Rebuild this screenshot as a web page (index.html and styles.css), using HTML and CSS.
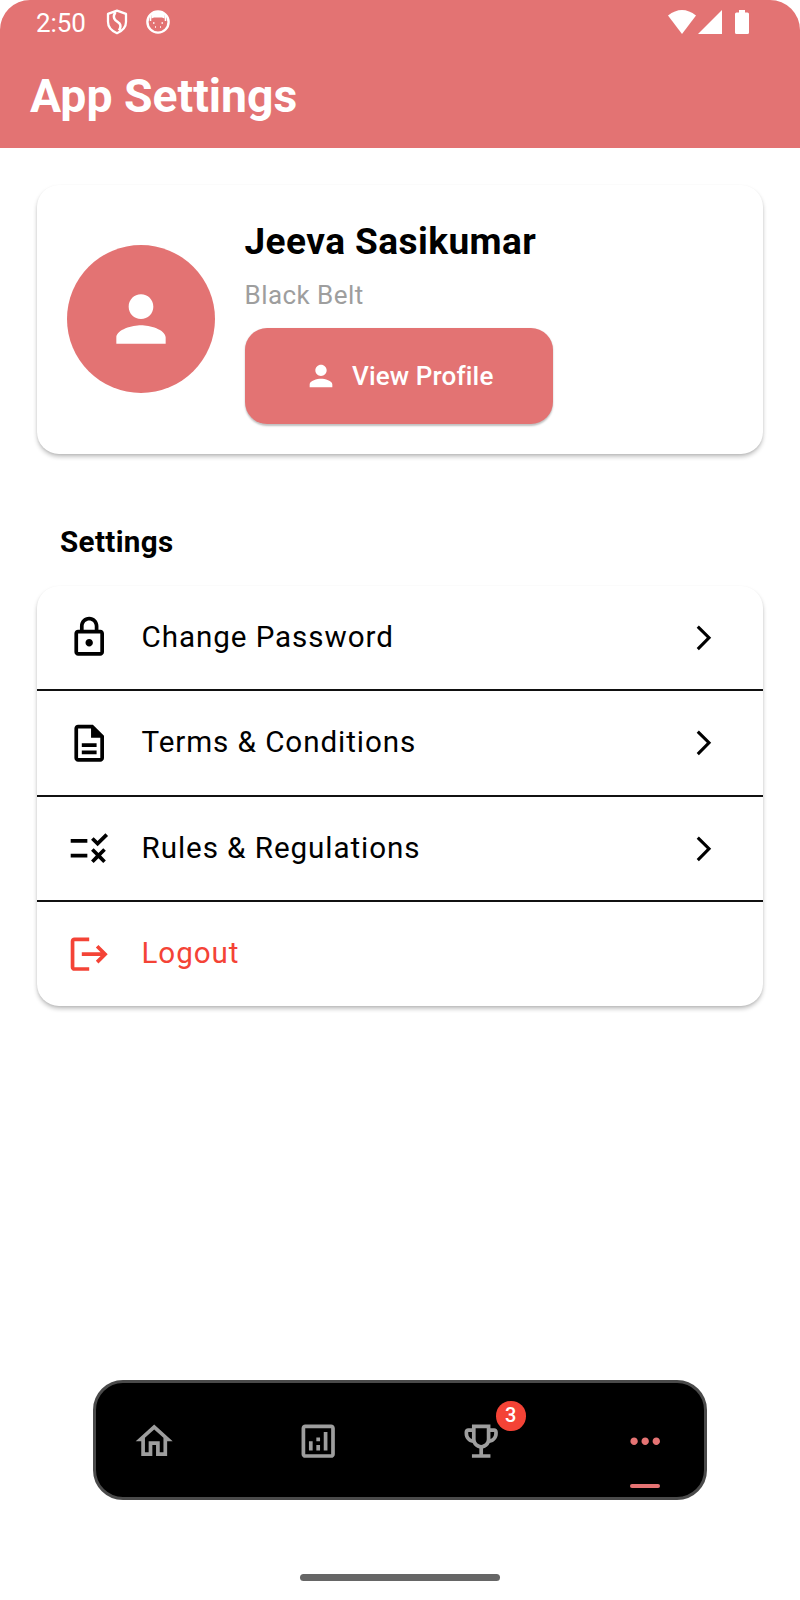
FILE: index.html
```html
<!DOCTYPE html>
<html lang="en">
<head>
<meta charset="utf-8">
<title>App Settings</title>
<link rel="stylesheet" href="styles.css">
</head>
<body>
<div class="screen">
  <header class="app-bar">
    <div class="status">
      <span class="time">2:50</span>
      <svg class="shield" viewBox="0 0 22 26"><path d="M11 1.6L20 4.800V13C20 18 16.500 21.800 11 24.200C5.500 21.800 2 18 2 13V4.800Z"/><path class="curve" d="M9.500 3C5 10 11 12 13.500 14.500C15.500 17 14.500 19 13 21.500"/></svg>
      <svg class="face" viewBox="0 0 24 24"><circle cx="12" cy="12" r="10.600"/><path class="solid" d="M5 3.500Q12-1 19 3.500L18.500 8.500L16 7.500H8L5.500 8.500Z"/><path class="marks" d="M4.500 6v5M19.500 6v5M7 13h1.500M15.500 13h1.500M9 17h1M14 17h1"/></svg>
      <span class="spacer"></span>
      <svg class="wifi" viewBox="0 0 28 24"><path d="M0 5.500Q14-5.500 28 5.500L14 24Z"/></svg>
      <svg class="signal" viewBox="0 0 24 24"><path d="M24 0V24H0Z"/></svg>
      <svg class="battery" viewBox="0 0 14 24"><path d="M4 0h6v2.500h2.500Q14 2.500 14 4V22.500Q14 24 12.500 24h-11Q0 24 0 22.500V4Q0 2.500 1.500 2.500H4Z"/></svg>
    </div>
    <h1>App Settings</h1>
  </header>

  <main>
    <section class="card profile">
      <div class="avatar"><svg viewBox="0 0 24 24"><path d="M12 12c2.210 0 4-1.790 4-4s-1.790-4-4-4-4 1.790-4 4 1.790 4 4 4zm0 2c-2.670 0-8 1.340-8 4v2h16v-2c0-2.660-5.330-4-8-4z"/></svg></div>
      <div class="info">
        <h2>Jeeva Sasikumar</h2>
        <p>Black Belt</p>
        <button class="view"><svg viewBox="0 0 24 24"><path d="M12 12c2.210 0 4-1.790 4-4s-1.790-4-4-4-4 1.790-4 4 1.790 4 4 4zm0 2c-2.670 0-8 1.340-8 4v2h16v-2c0-2.660-5.330-4-8-4z"/></svg><span>View Profile</span></button>
      </div>
    </section>

    <h3>Settings</h3>
    <section class="card list">
      <div class="row">
        <svg class="icon" viewBox="0 0 24 24"><path d="M12 17c1.100 0 2-.9 2-2s-.9-2-2-2-2 .9-2 2 .9 2 2 2zm6-9h-1V6c0-2.760-2.240-5-5-5S7 3.240 7 6v2H6c-1.100 0-2 .9-2 2v10c0 1.100.9 2 2 2h12c1.100 0 2-.9 2-2V10c0-1.100-.9-2-2-2zM9 6c0-1.660 1.340-3 3-3s3 1.340 3 3v2H9V6zm9 14H6V10h12v10z"/></svg>
        <span class="label">Change Password</span>
        <svg class="chevron" viewBox="0 0 24 24"><path d="M6.230 20.230L8 22l10-10L8 2 6.230 3.770 14.460 12z"/></svg>
      </div>
      <div class="row tall">
        <svg class="icon" viewBox="0 0 24 24"><path d="M8 16h8v2H8zm0-4h8v2H8zm6-10H6c-1.100 0-2 .9-2 2v16c0 1.100.89 2 1.990 2H18c1.100 0 2-.9 2-2V8l-6-6zm4 18H6V4h7v5h5v11z"/></svg>
        <span class="label">Terms &amp; Conditions</span>
        <svg class="chevron" viewBox="0 0 24 24"><path d="M6.230 20.230L8 22l10-10L8 2 6.230 3.770 14.460 12z"/></svg>
      </div>
      <div class="row">
        <svg class="icon" viewBox="0 0 24 24"><path d="M16.540 11L13 7.460l1.410-1.410 2.120 2.120 4.240-4.240 1.410 1.410L16.540 11zM11 7H2v2h9V7zM21 13.410L19.590 12 17 14.590 14.410 12 13 13.410 15.590 16 13 18.590 14.410 20 17 17.410 19.590 20 21 18.590 18.410 16 21 13.410zM11 15H2v2h9v-2z"/></svg>
        <span class="label">Rules &amp; Regulations</span>
        <svg class="chevron" viewBox="0 0 24 24"><path d="M6.230 20.230L8 22l10-10L8 2 6.230 3.770 14.460 12z"/></svg>
      </div>
      <div class="row logout">
        <svg class="icon" viewBox="0 0 24 24"><path d="M17 7l-1.410 1.410L18.170 11H8v2h10.170l-2.580 2.580L17 17l5-5zM4 5h8V3H4c-1.100 0-2 .9-2 2v14c0 1.100.9 2 2 2h8v-2H4V5z"/></svg>
        <span class="label">Logout</span>
      </div>
    </section>
  </main>

  <nav class="tabs">
    <a class="tab"><svg viewBox="0 0 24 24"><path d="M12 5.690l5 4.500V18h-2v-6H9v6H7v-7.810l5-4.500M12 3L2 12h3v8h6v-6h2v6h6v-8h3L12 3z"/></svg></a>
    <a class="tab"><svg viewBox="0 0 24 24"><path d="M19 3H5c-1.100 0-2 .9-2 2v14c0 1.100.9 2 2 2h14c1.100 0 2-.9 2-2V5c0-1.100-.9-2-2-2zm0 16H5V5h14v14zM7 12h2v5H7zM15 7h2v10h-2zM11 14h2v3h-2zM11 10h2v2h-2z"/></svg></a>
    <a class="tab"><svg viewBox="0 0 24 24"><path d="M19 5h-2V3H7v2H5c-1.100 0-2 .9-2 2v1c0 2.550 1.920 4.630 4.390 4.940.63 1.500 1.980 2.630 3.610 2.960V19H7v2h10v-2h-4v-3.100c1.630-.33 2.980-1.460 3.610-2.960C19.080 12.630 21 10.550 21 8V7c0-1.100-.9-2-2-2zM5 8V7h2v3.820C5.840 10.400 5 9.300 5 8zm7 6c-1.650 0-3-1.350-3-3V5h6v6c0 1.650-1.350 3-3 3zm7-6c0 1.300-.84 2.400-2 2.820V7h2v1z"/></svg><span class="badge">3</span></a>
    <a class="tab active"><svg viewBox="0 0 24 24"><path d="M6 10c-1.100 0-2 .9-2 2s.9 2 2 2 2-.9 2-2-.9-2-2-2zm12 0c-1.100 0-2 .9-2 2s.9 2 2 2 2-.9 2-2-.9-2-2-2zm-6 0c-1.100 0-2 .9-2 2s.9 2 2 2 2-.9 2-2-.9-2-2-2z"/></svg></a>
  </nav>
  <div class="handle"></div>
</div>
</body>
</html>
```
FILE: styles.css
```css
* { box-sizing: border-box; }
body { margin: 0; background: #fff; font-family: Roboto, sans-serif; color: #000; }
svg { display: block; flex: none; fill: currentColor; }
h1, h2, h3, p { margin: 0; }
.screen { width: 800px; height: 1600px; display: flex; flex-direction: column; align-items: center; }

.app-bar { width: 100%; height: 148px; background: #e37373; color: #fff; border-radius: 30px 30px 0 0; }
.status { display: flex; align-items: center; height: 44px; padding: 0 51px 0 36px; }
.time { width: 50px; font-size: 26px; line-height: 30px; letter-spacing: -0.1px; margin-top: 1px; }
.shield { width: 22px; height: 26px; margin-left: 20px; }
.shield path { fill: none; stroke: #fff; stroke-width: 2.3; stroke-linejoin: round; }
.shield .curve { stroke-width: 2.5; }
.face { width: 24px; height: 24px; margin-left: 18px; }
.face circle { fill: none; stroke: #fff; stroke-width: 2.4; }
.face .marks { fill: none; stroke: #fff; stroke-width: 1.5; }
.spacer { flex: 1; }
.wifi { width: 28px; height: 24px; }
.signal { width: 24px; height: 24px; margin-left: 2px; }
.battery { width: 14px; height: 24px; margin-left: 13px; }
h1 { padding-left: 30px; margin-top: 24px; font-size: 46.300px; line-height: 56px; font-weight: 700; }

main { width: 726px; padding-top: 37px; }
.card { background: #fff; border-radius: 22px; box-shadow: 0 3px 4px rgba(0,0,0,.22), 0 1px 2px rgba(0,0,0,.08); }
.profile { height: 269px; padding: 35px 30px 30px; display: flex; align-items: flex-start; gap: 29.500px; }
.avatar { width: 148px; height: 148px; margin-top: 25px; border-radius: 50%; background: #e37373; color: #fff; display: grid; place-items: center; }
.avatar svg { width: 74px; height: 74px; }
.info { display: flex; flex-direction: column; align-items: flex-start; }
h2 { font-size: 37px; line-height: 43px; font-weight: 700; letter-spacing: .45px; }
.info p { margin-top: 17px; font-size: 26px; line-height: 30px; color: #9e9e9e; letter-spacing: .45px; }
.view { margin-top: 17.500px; width: 308px; height: 96.500px; border: 0; border-radius: 22px; background: #e37373; color: #fff; padding: 0 0 0 59px; display: flex; align-items: center; gap: 14.500px; font: 500 26px/30px Roboto, sans-serif; letter-spacing: .15px; box-shadow: 0 1.500px 2px rgba(0,0,0,.25); }
.view svg { width: 34px; height: 34px; }
h3 { padding-left: 23px; margin-top: 71px; font-size: 29.600px; line-height: 35px; font-weight: 700; letter-spacing: .35px; }
.list { margin-top: 26px; }
.row { height: 105px; padding: 0 44px 0 29.700px; display: flex; align-items: center; border-bottom: 2px solid #111; }
.row.tall { height: 106px; }
.row:last-child { height: 104px; border: 0; }
.icon { width: 44.400px; height: 44.400px; }
.label { flex: 1; margin-left: 30.400px; padding-bottom: 2px; font-size: 29.600px; line-height: 36px; letter-spacing: .93px; }
.chevron { width: 29.600px; height: 29.600px; }
.logout { color: #f44336; }

.tabs { width: 614px; height: 120px; margin-top: 374px; padding: 0 36.500px 0 36px; display: flex; justify-content: space-between; align-items: center; background: #000; border: 3px solid #4a4a4a; border-radius: 30px; color: #9e9e9e; }
.tab { position: relative; padding-top: 3px; }
.tab svg { width: 44.400px; height: 44.400px; }
.badge { position: absolute; left: 36.500px; top: -15px; width: 29.600px; height: 29.600px; border-radius: 50%; background: #f44336; color: #fff; font-size: 20px; font-weight: 500; line-height: 29.600px; text-align: center; }
.active { color: #e57373; }
.active::after { content: ""; position: absolute; left: 7px; top: 68px; width: 30px; height: 4px; border-radius: 2px; background: currentColor; }
.handle { width: 200px; height: 7px; margin-top: 74px; border-radius: 4px; background: #666; }
```
